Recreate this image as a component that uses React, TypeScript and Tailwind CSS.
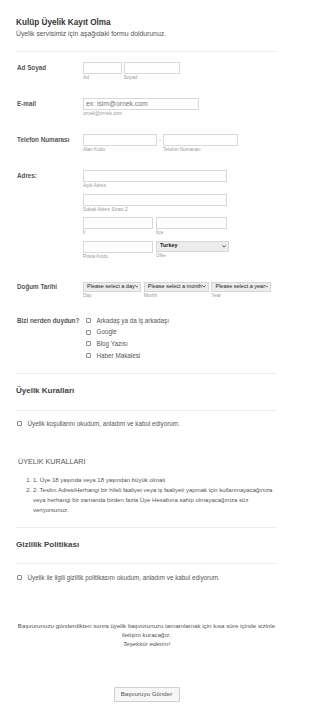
import { FC, ReactNode } from 'react';

const Chevron: FC = () => (
  <svg width="4" height="3" viewBox="0 0 8 6" fill="none" stroke="#333" strokeWidth="1.6" strokeLinecap="round" strokeLinejoin="round">
    <path d="M1 1.2l3 3 3-3" />
  </svg>
);

interface FieldProps {
  w: string;
  sub?: string;
  placeholder?: string;
}

const Field: FC<FieldProps> = ({ w, sub, placeholder }) => (
  <div className={`${w} shrink-0`}>
    <div className="h-[12px] border border-[#d9d9d9] bg-white px-[2px] flex items-center text-[6.8px] text-[#777] leading-none">
      {placeholder}
    </div>
    {sub && <div className="mt-[1px] text-[4.8px] leading-[6px] text-[#9a9a9a] whitespace-nowrap">{sub}</div>}
  </div>
);

const Select: FC<{ w: string; h: string; value: string; sub: string; bold?: boolean }> = ({ w, h, value, sub, bold }) => (
  <div className={`${w} shrink-0`}>
    <div className={`${h} border border-[#d6d6d6] bg-[#ececec] pl-[3px] pr-[2px] flex items-center justify-between`}>
      <span className={`text-[5.5px] leading-none text-[#222] whitespace-nowrap ${bold ? 'font-bold' : ''}`}>{value}</span>
      <Chevron />
    </div>
    <div className="mt-[1px] text-[4.8px] leading-[6px] text-[#9a9a9a]">{sub}</div>
  </div>
);

const Row: FC<{ label: string; className: string; children: ReactNode }> = ({ label, className, children }) => (
  <div className={`flex ${className}`}>
    <div className="w-[67px] shrink-0 pl-[1px] text-[6.3px] leading-[12px] font-bold text-[#555] whitespace-nowrap">{label}</div>
    <div>{children}</div>
  </div>
);

const Box: FC = () => (
  <input type="checkbox" className="appearance-none w-[5px] h-[5px] border border-[#8a8a8a] rounded-[1px] bg-white shrink-0" />
);

const Divider: FC<{ className: string }> = ({ className }) => (
  <div className={`border-t border-[#ededed] ${className}`} />
);

export default function App() {
  const sources = ['Arkadaş ya da iş arkadaşı', 'Google', 'Blog Yazısı', 'Haber Makalesi'];

  return (
    <div className="w-[310px] min-h-[717px] bg-white font-['Liberation_Sans',Arial,sans-serif] text-[#555]">
      <div className="px-[16px] pt-[18px] w-[293px]">
        {/* Header */}
        <h1 className="text-[8.2px] leading-[10px] font-bold text-[#333]">Kulüp Üyelik Kayıt Olma</h1>
        <p className="mt-[2px] text-[6.8px] leading-[8px] text-[#555]">Üyelik servisimiz için aşağıdaki formu doldurunuz.</p>
        <Divider className="mt-[13px]" />

        {/* Ad Soyad */}
        <Row label="Ad Soyad" className="mt-[10px]">
          <div className="flex gap-[1.7px]">
            <Field w="w-[39px]" sub="Ad" />
            <Field w="w-[56.7px]" sub="Soyad" />
          </div>
        </Row>

        {/* E-mail */}
        <Row label="E-mail" className="mt-[17px]">
          <Field w="w-[116px]" sub="ornek@ornek.com" placeholder="ex: isim@ornek.com" />
        </Row>

        {/* Telefon */}
        <Row label="Telefon Numarası" className="mt-[17px]">
          <div className="flex">
            <Field w="w-[74px]" sub="Alan Kodu" />
            <div className="w-[6px] text-center text-[6px] leading-[12px]">-</div>
            <Field w="w-[74.5px]" sub="Telefon Numarası" />
          </div>
        </Row>

        {/* Adres */}
        <Row label="Adres:" className="mt-[17px]">
          <div className="flex flex-col gap-[4.5px]">
            <Field w="w-[143.5px]" sub="Açık Adres" />
            <Field w="w-[143.5px]" sub="Sokak Adres Sırası 2" />
            <div className="flex gap-[3px]">
              <Field w="w-[70px]" sub="İl" />
              <Field w="w-[70.5px]" sub="İlçe" />
            </div>
            <div className="flex gap-[3px]">
              <Field w="w-[70px]" sub="Posta Kodu" />
              <Select w="w-[72.7px]" h="h-[11px]" value="Turkey" sub="Ülke" bold />
            </div>
          </div>
        </Row>

        {/* Doğum Tarihi */}
        <div className="flex mt-[22px]">
          <div className="w-[67px] shrink-0 pl-[1px] text-[6.3px] leading-[10px] font-bold text-[#555]">Doğum Tarihi</div>
          <div className="flex gap-[2.4px]">
            <Select w="w-[58.4px]" h="h-[10px]" value="Please select a day" sub="Day" />
            <Select w="w-[65.3px]" h="h-[10px]" value="Please select a month" sub="Month" />
            <Select w="w-[60px]" h="h-[10px]" value="Please select a year" sub="Year" />
          </div>
        </div>

        {/* Bizi nerden duydun */}
        <div className="flex mt-[16px]">
          <div className="w-[67px] shrink-0 pl-[1px] text-[6.3px] leading-[11.7px] font-bold text-[#555] whitespace-nowrap">Bizi nerden duydun?</div>
          <div className="pl-[3px]">
            {sources.map((s) => (
              <label key={s} className="flex items-center gap-[5.5px] h-[11.7px] text-[6.3px] text-[#555]">
                <Box />
                {s}
              </label>
            ))}
          </div>
        </div>

        <Divider className="mt-[12px]" />
        <h2 className="mt-[11px] text-[8px] leading-[12px] font-bold text-[#444]">Üyelik Kuralları</h2>
        <Divider className="mt-[12.5px]" />

        <label className="mt-[8px] flex items-center gap-[5.5px] pl-[1px] h-[10px] text-[6.3px] text-[#555]">
          <Box />
          Üyelik koşullarını okudum, anladım ve kabul ediyorum.
        </label>

        <p className="mt-[28px] pl-[2px] text-[7.2px] leading-[10px] text-[#555]">ÜYELİK KURALLARI</p>
        <ol className="mt-[8px] pl-[17px] list-decimal text-[6px] leading-[10px] text-[#555]">
          <li>1. Üye 18 yaşında veya 18 yaşından büyük olmalı</li>
          <li>
            2. Teslim AdresiHerhangi bir hileli faaliyet veya iş faaliyeti yapmak için kullanmayacağınıza veya
            herhangi bir zamanda birden fazla Üye Hesabına sahip olmayacağınıza söz veriyorsunuz.
          </li>
        </ol>

        <Divider className="mt-[12.5px]" />
        <h2 className="mt-[11px] text-[8px] leading-[12px] font-bold text-[#444]">Gizlilik Politikası</h2>
        <Divider className="mt-[11.5px]" />

        <label className="mt-[9px] flex items-center gap-[5.5px] pl-[1px] h-[10px] text-[6.3px] text-[#555]">
          <Box />
          Üyelik ile ilgili gizlilik politikasını okudum, anladım ve kabul ediyorum.
        </label>

        {/* Closing text */}
        <div className="mt-[38px] text-center text-[6.2px] leading-[9.3px] text-[#555]">
          <p>
            Başvurunuzu gönderdikten sonra üyelik başvurunuzu tamamlamak için kısa süre içinde sizinle iletişim kuracağız.
          </p>
          <p className="italic">Teşekkür ederim!</p>
        </div>

        <div className="mt-[38px] flex justify-center">
          <button className="w-[66px] h-[15px] border border-[#cfcfcf] bg-[#f6f6f6] rounded-[1px] text-[6.2px] text-[#555]">
            Başvuruyu Gönder
          </button>
        </div>
      </div>
    </div>
  );
}
